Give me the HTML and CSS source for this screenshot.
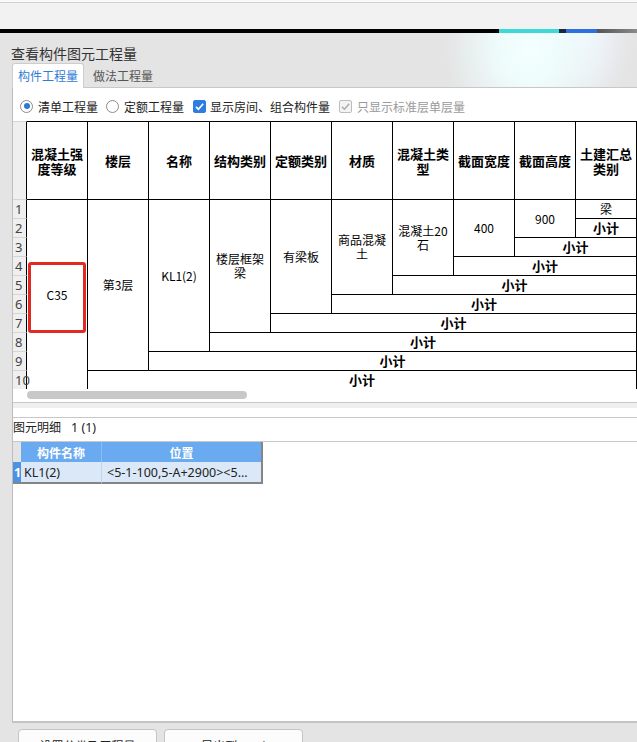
FILE: index.html
```html
<!DOCTYPE html>
<html lang="zh">
<head>
<meta charset="utf-8">
<title>查看构件图元工程量</title>
<link rel="stylesheet" href="styles.css">
</head>
<body>
<div class="topbar"></div>
<div class="accent"><span class="seg-black"></span><span class="seg-cyan"></span><span class="seg-navy"></span><span class="seg-blue"></span><span class="seg-gray"></span></div>
<div class="window">
  <div class="head">
    <div class="title">查看构件图元工程量</div>
    <div class="tabs">
      <div class="tab active">构件工程量</div>
      <div class="tab">做法工程量</div>
    </div>
  </div>
  <div class="panel">
    <div class="opts">
      <label class="opt o1"><span class="radio on"></span>清单工程量</label>
      <label class="opt o2"><span class="radio"></span>定额工程量</label>
      <label class="opt o3"><span class="cb on"><svg viewBox="0 0 13 13" width="13" height="13"><path d="M3 6.8 L5.4 9.2 L10.2 3.8" fill="none" stroke="#fff" stroke-width="1.7"/></svg></span>显示房间、组合构件量</label>
      <label class="opt o4 disabled"><span class="cb dis"><svg viewBox="0 0 13 13" width="13" height="13"><path d="M3 6.8 L5.4 9.2 L10.2 3.8" fill="none" stroke="#a9a9a9" stroke-width="1.4"/></svg></span>只显示标准层单层量</label>
    </div>
    <div class="grid-wrap">
      <table class="qty">
        <colgroup><col class="c-num"><col class="c-d"><col class="c-d"><col class="c-d"><col class="c-d"><col class="c-d"><col class="c-d"><col class="c-d"><col class="c-d"><col class="c-d"><col class="c-d"></colgroup>
        <thead>
          <tr class="hr"><th class="num"></th><th>混凝土强度等级</th><th>楼层</th><th>名称</th><th>结构类别</th><th>定额类别</th><th>材质</th><th>混凝土类型</th><th>截面宽度</th><th>截面高度</th><th>土建汇总类别</th></tr>
        </thead>
        <tbody>
          <tr><td class="num">1</td><td rowspan="10">C35</td><td rowspan="9">第3层</td><td rowspan="8">KL1(2)</td><td rowspan="7">楼层框架梁</td><td rowspan="6">有梁板</td><td rowspan="5">商品混凝土</td><td rowspan="4">混凝土20石</td><td rowspan="3">400</td><td rowspan="2">900</td><td>梁</td></tr>
          <tr><td class="num">2</td><td class="sub">小计</td></tr>
          <tr><td class="num">3</td><td class="sub" colspan="2">小计</td></tr>
          <tr><td class="num">4</td><td class="sub" colspan="3">小计</td></tr>
          <tr><td class="num">5</td><td class="sub" colspan="4">小计</td></tr>
          <tr><td class="num">6</td><td class="sub" colspan="5">小计</td></tr>
          <tr><td class="num">7</td><td class="sub" colspan="6">小计</td></tr>
          <tr><td class="num">8</td><td class="sub" colspan="7">小计</td></tr>
          <tr><td class="num">9</td><td class="sub" colspan="8">小计</td></tr>
          <tr><td class="num">10</td><td class="sub" colspan="9">小计</td></tr>
        </tbody>
      </table>
      <div class="mark"></div>
    </div>
    <div class="hscroll"><div class="thumb"></div></div>
    <div class="splitter"></div>
    <div class="spacer"></div>
    <div class="detail-label">图元明细<span class="count">1 (1)</span></div>
    <table class="detail">
      <colgroup><col class="d-num"><col class="d-name"><col class="d-pos"></colgroup>
      <thead><tr><th class="dn"></th><th>构件名称</th><th class="last">位置</th></tr></thead>
      <tbody><tr><td class="dn">1</td><td>KL1(2)</td><td class="last">&lt;5-1-100,5-A+2900&gt;&lt;5...</td></tr></tbody>
    </table>
  </div>
  <div class="footer">
    <div class="btn">设置分类及工程量</div>
    <div class="btn">导出到Excel</div>
  </div>
</div>
</body>
</html>
```
FILE: styles.css
```css
html, body {
  margin: 0;
  padding: 0;
}
body {
  width: 637px;
  height: 742px;
  overflow: hidden;
  background: #e5e5e5;
  font-family: "Noto Sans CJK SC", "Noto Sans", sans-serif;
  color: #333;
}
.topbar {
  height: 29px;
  background: linear-gradient(#fafafa 0 2px, #d2d2d2 2px 3px, #f2f2f2 3px);
}
.accent {
  display: flex;
  height: 4px;
}
.accent span { display: block; height: 4px; }
.seg-black { width: 499px; background: #000; }
.seg-cyan { width: 60px; background: #3fd8d8; }
.seg-navy { width: 7px; background: #1c2540; }
.seg-blue { width: 31px; background: #2d6fde; }
.seg-gray { width: 40px; background: linear-gradient(90deg, #555, #8a8a8a); }

.window {
  height: 709px;
  box-sizing: border-box;
  padding-left: 12px;
  display: flex;
  flex-direction: column;
  background-color: #e4e4e4;
  background-image:
    radial-gradient(85px 100px at 530px 15px, #f4ffff 0%, #effcfc 35%, rgba(228,228,228,0) 100%),
    radial-gradient(50px 80px at 585px 0px, #f0f4ff 0%, rgba(228,228,228,0) 100%);
  background-repeat: no-repeat;
}
.head {
  padding-top: 10px;
}
.title {
  font-size: 14px;
  line-height: 20px;
  color: #333;
  margin-left: -1px;
}
.tabs {
  display: flex;
  height: 24px;
  gap: 3px;
  align-items: flex-start;
}
.tab {
  height: 24px;
  padding: 0 5px;
  font-size: 12px;
  line-height: 24px;
  color: #555;
  border: 1px solid transparent;
  border-bottom: none;
}
.tab.active {
  background: #fff;
  color: #2f7bd6;
  border-color: #cdcdcd;
  border-radius: 3px 3px 0 0;
  position: relative;
  z-index: 1;
}

.panel {
  flex: none;
  height: 636px;
  box-sizing: border-box;
  background: #fff;
  border-top: 1px solid #c8c8c8;
  border-left: 1px solid #bdbdbd;
  border-bottom: 2px solid #c4c4c4;
  display: flex;
  flex-direction: column;
}
.opts {
  flex: none;
  height: 33px;
  box-sizing: border-box;
  padding: 3px 0 0 7px;
  display: flex;
  align-items: center;
  font-size: 12px;
  color: #222;
}
.opt {
  display: flex;
  align-items: center;
  gap: 5px;
  white-space: nowrap;
}
.o1 { margin-right: 8px; }
.o2 { margin-right: 9px; }
.o3 { margin-right: 9px; gap: 4px; }
.o4 { gap: 5px; }
.disabled { color: #9a9a9a; }
.radio {
  width: 13px;
  height: 13px;
  box-sizing: border-box;
  border: 1px solid #8c8c8c;
  border-radius: 50%;
  background: #fff;
  display: flex;
  align-items: center;
  justify-content: center;
}
.radio.on::after {
  content: "";
  width: 6px;
  height: 6px;
  border-radius: 50%;
  background: #2a78d8;
}
.cb {
  width: 13px;
  height: 13px;
  box-sizing: border-box;
  border-radius: 2px;
  display: block;
  position: relative;
}
.cb svg { display: block; position: absolute; left: -1px; top: -1px; }
.cb.on { background: #2e7de1; border: 1px solid #2e7de1; }
.cb.dis { background: #f3f3f3; border: 1px solid #bdbdbd; }

.grid-wrap {
  flex: none;
  height: 268px;
  overflow: hidden;
  position: relative;
}
.qty {
  width: 624px;
  table-layout: fixed;
  border-collapse: separate;
  border-spacing: 0;
  font-size: 12px;
  color: #000;
}
.c-num { width: 14px; }
.c-d { width: 61px; }
.qty th, .qty td {
  border-right: 1px solid #000;
  border-bottom: 1px solid #000;
  padding: 0 2px;
  text-align: center;
  vertical-align: middle;
  overflow: visible;
}
.qty thead th {
  border-top: 1px solid #000;
  font-size: 13px;
  font-weight: bold;
  line-height: 15px;
  padding: 0 3px;
}
.qty .hr { height: 79px; }
.qty tbody tr { height: 19px; }
.qty tbody td {
  line-height: 14px;
  font-weight: normal;
}
.qty .num {
  background: #efefef;
  border-bottom: 1px solid #d5d5d5;
  border-top-color: #d5d5d5;
  text-align: left;
  padding: 0 0 0 2px;
  font-family: "Noto Sans", sans-serif;
  font-size: 13px;
  font-weight: normal;
  color: #444;
  white-space: nowrap;
}
.qty td.sub {
  font-weight: bold;
  font-size: 13px;
}
.mark {
  position: absolute;
  left: 15px;
  top: 141px;
  width: 58px;
  height: 71px;
  box-sizing: border-box;
  border: 3px solid #e02b25;
  border-radius: 3px;
}

.hscroll {
  flex: none;
  height: 14px;
  box-sizing: border-box;
  padding-top: 2px;
  border-bottom: 1px solid #c6c6c6;
}
.thumb {
  margin-left: 14px;
  width: 220px;
  height: 8px;
  border-radius: 4px;
  background: #c8c8c8;
}
.splitter {
  flex: none;
  height: 5px;
  background: #efefef;
}
.spacer {
  flex: none;
  height: 9px;
}
.detail-label {
  flex: none;
  height: 23px;
  box-sizing: content-box;
  border-top: 1px solid #c8c8c8;
  border-bottom: 1px solid #c8c8c8;
  padding: 0;
  font-size: 12px;
  line-height: 18px;
  color: #222;
}
.count {
  margin-left: 10px;
  font-family: "Noto Sans", sans-serif;
  font-size: 12.5px;
}
.detail {
  width: 250px;
  table-layout: fixed;
  border-collapse: separate;
  border-spacing: 0;
  font-size: 12px;
}
.d-num { width: 8px; }
.d-name { width: 81px; }
.d-pos { width: 161px; }
.detail th, .detail td {
  height: 20px;
  padding: 0;
  box-sizing: border-box;
  white-space: nowrap;
  overflow: hidden;
}
.detail th {
  background: #6aaaf0;
  color: #fff;
  font-weight: bold;
  text-align: center;
  border-right: 1px solid #8dbdf2;
}
.detail th.dn {
  background: #e4e4e4;
  border-right: none;
}
.detail th.last, .detail td.last {
  border-right: 2px solid #858585;
}
.detail td {
  background: #dae8f8;
  color: #222;
  text-align: left;
  padding-left: 3px;
  font-family: "Noto Sans", "Noto Sans CJK SC", sans-serif;
  font-size: 12.5px;
  border-right: 1px solid #c3d5ea;
  border-bottom: 2px solid #858585;
  height: 22px;
}
.detail td.dn {
  background: #4c93e6;
  color: #fff;
  padding: 0 0 0 1px;
  font-weight: bold;
  border-right: none;
}
.detail td.last {
  padding-left: 5px;
}

.footer {
  flex: none;
  display: flex;
  gap: 7px;
  padding: 6px 0 0 6px;
}
.btn {
  width: 139px;
  height: 30px;
  box-sizing: border-box;
  border: 1px solid #c4c4c4;
  border-radius: 4px;
  background: #fcfcfc;
  display: flex;
  align-items: center;
  justify-content: center;
  font-size: 12px;
  color: #222;
  padding-top: 2px;
}
```
